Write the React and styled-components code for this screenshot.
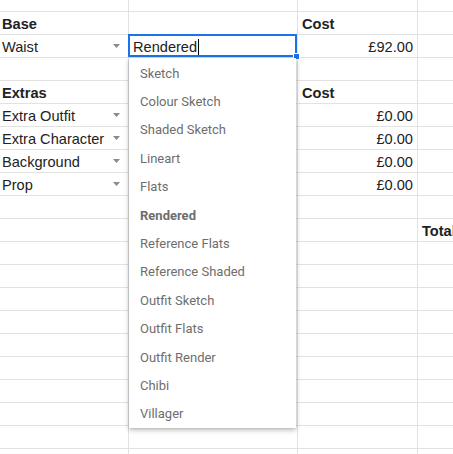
import React from 'react';
import styled, { createGlobalStyle } from 'styled-components';

const GlobalStyle = createGlobalStyle`
  html, body {
    margin: 0;
    padding: 0;
    background: #fff;
    overflow: hidden;
  }
`;

const Viewport = styled.div`
  width: 453px;
  height: 454px;
  overflow: hidden;
`;

const Sheet = styled.div`
  position: relative;
  display: grid;
  grid-template-columns: 131px 169px 120px 160px;
  grid-template-rows: 12px;
  grid-auto-rows: 23px;
  margin-left: -2px;
  font-family: "Liberation Sans", Arial, sans-serif;
  font-size: 14.6px;
  color: #222;
`;

const Cell = styled.div`
  box-sizing: border-box;
  display: flex;
  align-items: center;
  justify-content: ${p => (p.$right ? 'flex-end' : 'flex-start')};
  padding: 1px 4px 0 4px;
  border-right: 1px solid #e2e2e2;
  border-bottom: 1px solid #e2e2e2;
  font-weight: ${p => (p.$bold ? 700 : 400)};
  white-space: nowrap;
  position: relative;
`;

const Arrow = styled.svg`
  flex: none;
  margin-left: auto;
  margin-right: 4px;
  margin-top: -1px;
`;

const EditCell = styled(Cell)`
  z-index: 3;
  &::after {
    content: '';
    position: absolute;
    left: -1px;
    top: -1px;
    right: 0;
    bottom: 0;
    border: 2px solid #1a73e8;
  }
`;

const Handle = styled.span`
  position: absolute;
  right: -3px;
  bottom: -3px;
  width: 5px;
  height: 5px;
  background: #1a73e8;
  border: 1px solid #fff;
  z-index: 4;
`;

const Caret = styled.span`
  display: inline-block;
  width: 1px;
  height: 16px;
  background: #000;
  margin-left: 1px;
`;

const Menu = styled.ul`
  position: absolute;
  left: 131px;
  top: 58px;
  width: 167px;
  margin: 0;
  padding: 1px 0 0;
  list-style: none;
  background: #fff;
  box-shadow: 0 2px 5px rgba(0, 0, 0, 0.28), 0 0 2px rgba(0, 0, 0, 0.12);
  z-index: 5;
  font-family: Roboto, "Liberation Sans", sans-serif;
  font-size: 13px;
`;

const Item = styled.li`
  height: 28.4px;
  display: flex;
  align-items: center;
  padding-left: 11px;
  color: #6e6e6e;
  font-weight: ${p => (p.$active ? 700 : 400)};
`;

const DropArrow = () => (
  <Arrow width="7" height="4" viewBox="0 0 7 4">
    <path d="M0 0h7L3.5 4z" fill="#8a8a8a" />
  </Arrow>
);

const rows = [
  [],
  [{ t: 'Base', b: true }, null, { t: 'Cost', b: true }],
  [{ t: 'Waist', dd: true }, { edit: 'Rendered' }, { t: '£92.00', r: true }],
  [],
  [{ t: 'Extras', b: true }, null, { t: 'Cost', b: true }],
  [{ t: 'Extra Outfit', dd: true }, null, { t: '£0.00', r: true }],
  [{ t: 'Extra Character', dd: true }, null, { t: '£0.00', r: true }],
  [{ t: 'Background', dd: true }, null, { t: '£0.00', r: true }],
  [{ t: 'Prop', dd: true }, null, { t: '£0.00', r: true }],
  [],
  [null, null, null, { t: 'Total', b: true }],
  ...Array.from({ length: 10 }, () => []),
];

const options = [
  'Sketch',
  'Colour Sketch',
  'Shaded Sketch',
  'Lineart',
  'Flats',
  'Rendered',
  'Reference Flats',
  'Reference Shaded',
  'Outfit Sketch',
  'Outfit Flats',
  'Outfit Render',
  'Chibi',
  'Villager',
];

const renderCell = (c, key) => {
  if (c && c.edit) {
    return (
      <EditCell key={key}>
        {c.edit}
        <Caret />
        <Handle />
      </EditCell>
    );
  }
  return (
    <Cell key={key} $bold={c && c.b} $right={c && c.r}>
      {c && c.t}
      {c && c.dd && <DropArrow />}
    </Cell>
  );
};

const App = () => (
  <Viewport>
    <GlobalStyle />
    <Sheet>
      {rows.map((row, ri) =>
        [0, 1, 2, 3].map(ci => renderCell(row[ci], `${ri}-${ci}`))
      )}
      <Menu>
        {options.map(o => (
          <Item key={o} $active={o === 'Rendered'}>{o}</Item>
        ))}
      </Menu>
    </Sheet>
  </Viewport>
);

export default App;
